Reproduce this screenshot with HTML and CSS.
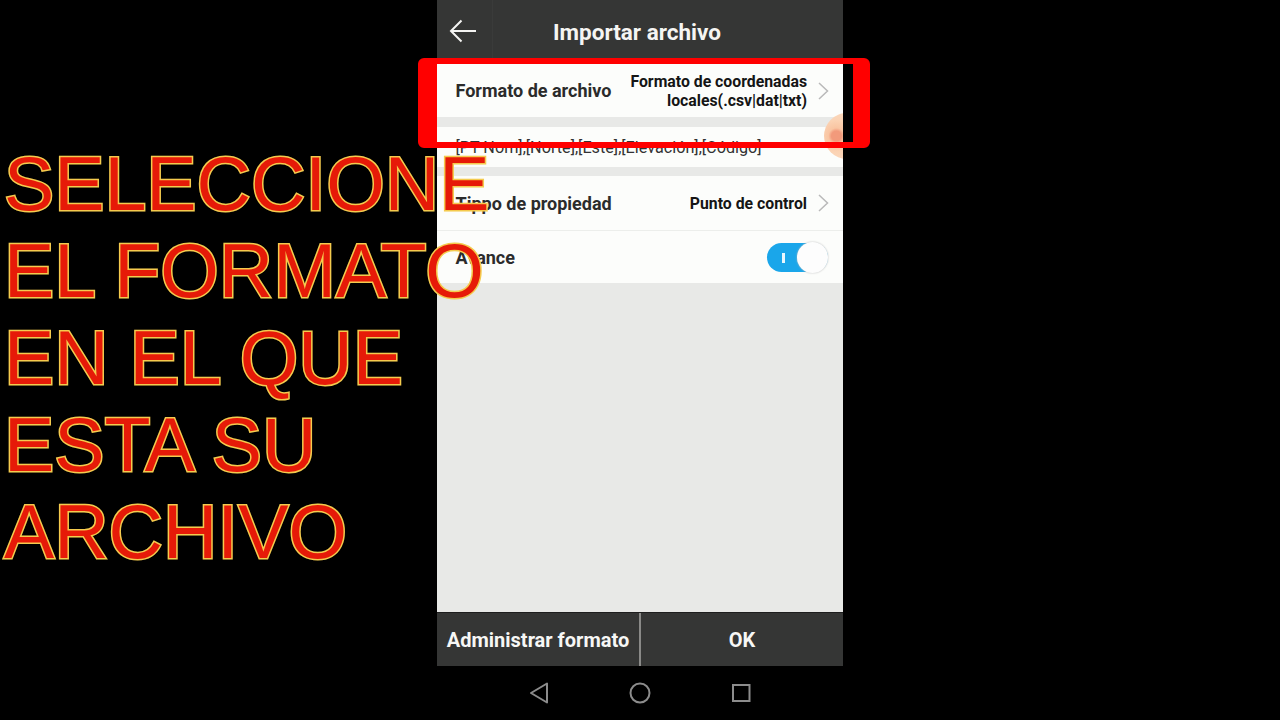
FILE: index.html
```html
<!DOCTYPE html>
<html lang="es">
<head>
<meta charset="utf-8">
<title>Importar archivo</title>
<link rel="stylesheet" href="styles.css">
</head>
<body>
<main class="phone">
  <header class="topbar">
    <button class="back" aria-label="Volver">
      <svg width="28" height="24" viewBox="0 0 28 24"><path d="M27 12H2M12.500 1.500L2 12l10.500 10.500" fill="none" stroke="#f4f4f2" stroke-width="2"/></svg>
    </button>
    <h1 class="title">Importar archivo</h1>
  </header>
  <section class="content">
    <div class="row row-format">
      <span class="label">Formato de archivo</span>
      <span class="value value-two">Formato de coordenadas<br>locales(.csv|dat|txt)</span>
      <svg class="chev" width="11" height="18" viewBox="0 0 11 18"><path d="M1 1l8.500 8L1 17" fill="none" stroke="#b9b9b9" stroke-width="1.500"/></svg>
    </div>
    <div class="row row-fields">[PT Nom],[Norte],[Este],[Elevación],[Código]</div>
    <div class="row row-prop">
      <span class="label">Tippo de propiedad</span>
      <span class="value">Punto de control</span>
      <svg class="chev" width="11" height="18" viewBox="0 0 11 18"><path d="M1 1l8.500 8L1 17" fill="none" stroke="#b9b9b9" stroke-width="1.500"/></svg>
    </div>
    <div class="row row-adv">
      <span class="label">Avance</span>
      <span class="toggle"><i class="toggle-mark"></i><i class="knob"></i></span>
    </div>
    <div class="touch"></div>
  </section>
  <footer class="actions">
    <button class="action action-manage">Administrar formato</button>
    <button class="action action-ok">OK</button>
  </footer>
  <nav class="sysnav">
    <svg width="20" height="22" viewBox="0 0 20 22"><path d="M18 1.500V20.500L2 11Z" fill="none" stroke="#8c8c8c" stroke-width="2" stroke-linejoin="round"/></svg>
    <svg width="22" height="22" viewBox="0 0 22 22"><circle cx="11" cy="11" r="9.500" fill="none" stroke="#8c8c8c" stroke-width="2"/></svg>
    <svg width="20" height="20" viewBox="0 0 20 20"><rect x="2" y="2" width="16.500" height="16" fill="none" stroke="#8c8c8c" stroke-width="2"/></svg>
  </nav>
</main>
<div class="highlight"></div>
<p class="caption">SELECCIONE<br>EL FORMATO<br>EN EL QUE<br>ESTA SU<br>ARCHIVO</p>
</body>
</html>
```
FILE: styles.css
```css
* { box-sizing: border-box; }
html, body { margin: 0; height: 100%; }
body {
  background: #000;
  display: flex;
  justify-content: center;
  overflow: hidden;
  font-family: Roboto, "Liberation Sans", sans-serif;
}
.phone {
  width: 406px;
  height: 720px;
  display: flex;
  flex-direction: column;
}
.topbar {
  height: 64px;
  flex: none;
  background: #353635;
  display: flex;
  align-items: flex-start;
  position: relative;
}
.back {
  width: 56px;
  height: 58px;
  padding: 4px 0 0 12px;
  background: none;
  border: 0;
  border-right: 1px solid #3a3b3a;
  display: flex;
  align-items: center;
}
.title {
  margin: 0;
  position: absolute;
  left: 0;
  right: 6px;
  top: 18px;
  text-align: center;
  font-size: 22.500px;
  line-height: 28px;
  font-weight: 700;
  color: #f5f5f3;
}
.content {
  flex: 1;
  background: #e8e9e7;
  position: relative;
  overflow: hidden;
}
.row {
  background: #fcfdfb;
  display: flex;
  align-items: center;
  padding: 0 14px 0 18.500px;
  color: #232323;
}
.row-format { height: 53px; margin-bottom: 10px; }
.row-fields {
  height: 40px;
  margin-bottom: 9px;
  font-size: 16.200px;
  color: #333;
  padding-top: 1px;
}
.row-prop { height: 55px; border-bottom: 1px solid #eceeeb; }
.row-adv { height: 52px; }
.label { font-size: 18px; font-weight: 700; color: #2b2b2b; }
.value {
  margin-left: auto;
  margin-right: 11px;
  font-size: 15.800px;
  font-weight: 700;
  color: #151515;
  text-align: right;
}
.value-two { line-height: 19px; }
.toggle {
  margin-left: auto;
  margin-right: 1px;
  width: 61px;
  height: 29px;
  border-radius: 15px;
  background: #1aa6ea;
  position: relative;
}
.toggle-mark {
  position: absolute;
  left: 15px;
  top: 10px;
  width: 3px;
  height: 10px;
  background: #e9f6fd;
}
.knob {
  position: absolute;
  right: 0;
  top: -1px;
  width: 31px;
  height: 31px;
  border-radius: 50%;
  background: #fdfdfd;
  box-shadow: 0 0 2px #bbb;
}
.touch {
  position: absolute;
  right: -27px;
  top: 49px;
  width: 46px;
  height: 46px;
  border-radius: 50%;
  background: radial-gradient(circle at 27% 50%, #f29a7b 0 5px, #f9c5a2 8px, #fbd3b4 16px, #fbe0cb 100%);
}
.actions {
  height: 54px;
  flex: none;
  display: flex;
  background: #353635;
  border-top: 1px solid #1e1e1e;
}
.action {
  background: none;
  border: 0;
  padding: 0;
  color: #f7f7f5;
  font-family: inherit;
  font-size: 20px;
  font-weight: 700;
}
.action-manage { width: 204px; border-right: 2px solid #8a8a88; }
.action-ok { flex: 1; }
.sysnav {
  flex: none;
  height: 54px;
  display: flex;
  justify-content: center;
  align-items: center;
  gap: 80px;
}
.highlight {
  position: absolute;
  left: 418px;
  top: 58px;
  width: 452px;
  height: 90px;
  border-style: solid;
  border-color: #ff0000;
  border-width: 6px 17px 6px 19px;
  border-radius: 6px;
}
.caption {
  position: absolute;
  left: 4px;
  top: 141px;
  margin: 0;
  font-family: "Liberation Sans", Arial, sans-serif;
  font-size: 75.300px;
  line-height: 87px;
  color: #e61a08;
  -webkit-text-stroke: 3px #f4cb4e;
  paint-order: stroke fill;
  white-space: nowrap;
}
```
